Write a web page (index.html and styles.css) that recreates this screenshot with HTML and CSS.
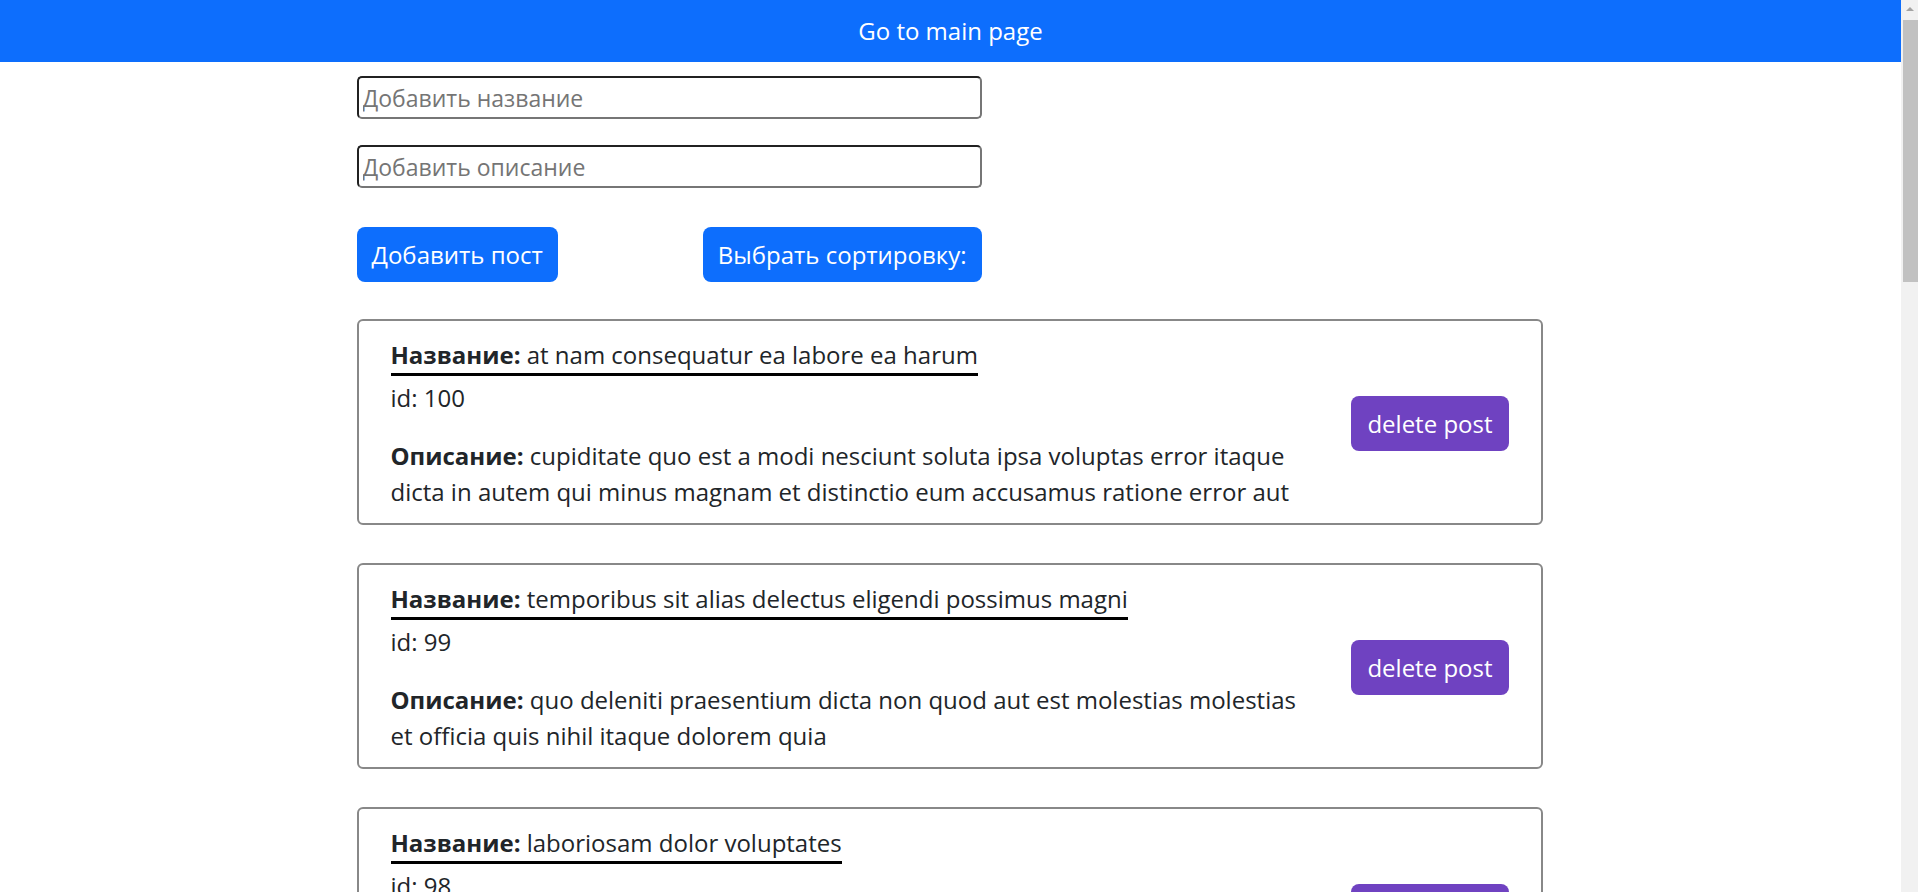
FILE: index.html
```html
<!DOCTYPE html>
<html lang="ru">
<head>
<meta charset="utf-8">
<title>Posts</title>
<link rel="stylesheet" href="styles.css">
</head>
<body>
<div class="viewport">
  <header class="topbar">
    <a class="home-link" href="#">Go to main page</a>
  </header>
  <main class="page">
    <form class="post-form">
      <input class="field" type="text" placeholder="Добавить название">
      <input class="field" type="text" placeholder="Добавить описание">
      <div class="form-actions">
        <button class="btn btn-primary" type="button">Добавить пост</button>
        <button class="btn btn-primary" type="button">Выбрать сортировку:</button>
      </div>
    </form>
    <section class="post-list">
      <article class="post">
        <div class="post-body">
          <div class="post-title"><strong>Название:</strong> at nam consequatur ea labore ea harum</div>
          <div class="post-id">id: 100</div>
          <p class="post-desc"><strong>Описание:</strong> cupiditate quo est a modi nesciunt soluta ipsa voluptas error itaque dicta in autem qui minus magnam et distinctio eum accusamus ratione error aut</p>
        </div>
        <button class="btn btn-purple" type="button">delete post</button>
      </article>
      <article class="post">
        <div class="post-body">
          <div class="post-title"><strong>Название:</strong> temporibus sit alias delectus eligendi possimus magni</div>
          <div class="post-id">id: 99</div>
          <p class="post-desc"><strong>Описание:</strong> quo deleniti praesentium dicta non quod aut est molestias molestias et officia quis nihil itaque dolorem quia</p>
        </div>
        <button class="btn btn-purple" type="button">delete post</button>
      </article>
      <article class="post">
        <div class="post-body">
          <div class="post-title"><strong>Название:</strong> laboriosam dolor voluptates</div>
          <div class="post-id">id: 98</div>
          <p class="post-desc"><strong>Описание:</strong> doloremque ex facilis sit sint culpa soluta assumenda eligendi non ut eius sequi ducimus vel quasi veritatis est dolores</p>
        </div>
        <button class="btn btn-purple" type="button">delete post</button>
      </article>
    </section>
  </main>
</div>
<div class="scrollbar" aria-hidden="true">
  <div class="scroll-arrow"></div>
  <div class="scroll-thumb"></div>
</div>
</body>
</html>
```

FILE: styles.css
```css
* {
  box-sizing: border-box;
}

html,
body {
  margin: 0;
  height: 100%;
}

body {
  display: flex;
  overflow: hidden;
  background: #fff;
  color: #212529;
  font-family: "Open Sans", "Noto Sans", sans-serif;
  font-size: 24px;
  line-height: 36px;
}

.viewport {
  flex: 1;
  min-width: 0;
  height: 100vh;
  overflow: hidden;
}

.topbar {
  height: 62px;
  background: #0d6efd;
  display: flex;
  align-items: center;
  justify-content: center;
}

.home-link {
  color: #fff;
  text-decoration: none;
}

.page {
  width: 1186px;
  margin-left: calc(50% - 594px);
  padding-top: 14px;
}

.post-form {
  width: 625px;
  display: flex;
  flex-direction: column;
}

.field {
  height: 43px;
  padding: 0 4px;
  border: 2px inset #767676;
  border-radius: 5px;
  font-family: "Open Sans", "Noto Sans", sans-serif;
  font-size: 23px;
  color: #000;
  background: #fff;
}

.field::placeholder {
  color: #757575;
}

.field + .field {
  margin-top: 26px;
}

.form-actions {
  margin-top: 39px;
  display: flex;
  justify-content: space-between;
}

.btn {
  height: 55px;
  padding: 0 15px;
  border: 0;
  border-radius: 8px;
  color: #fff;
  font-family: inherit;
  font-size: 24px;
  line-height: 36px;
  cursor: pointer;
}

.btn-primary {
  background: #0d6efd;
}

.btn-purple {
  background: #6f42c1;
  flex: none;
  padding: 0 16px;
}

.post-list {
  display: flex;
  flex-direction: column;
  gap: 38px;
  margin-top: 37px;
}

.post {
  display: flex;
  align-items: center;
  justify-content: space-between;
  padding: 16px 32px 13px;
  border: 2px solid #888;
  border-radius: 6px;
}

.post-body {
  width: 912px;
}

.post-title {
  display: inline-block;
  margin-bottom: 4px;
  border-bottom: 3px solid #000;
}

.post-desc {
  margin: 22px 0 0;
}

.scrollbar {
  width: 17px;
  height: 100vh;
  flex: none;
  background: #f1f1f1;
  display: flex;
  flex-direction: column;
  align-items: flex-end;
}

.scroll-arrow {
  width: 17px;
  height: 17px;
  display: flex;
  align-items: center;
  justify-content: center;
}

.scroll-arrow::before {
  content: "";
  border-left: 4px solid transparent;
  border-right: 4px solid transparent;
  border-bottom: 4px solid #a3a3a3;
}

.scroll-thumb {
  width: 15px;
  height: 262px;
  margin-top: 3px;
  background: #c1c1c1;
}
```
